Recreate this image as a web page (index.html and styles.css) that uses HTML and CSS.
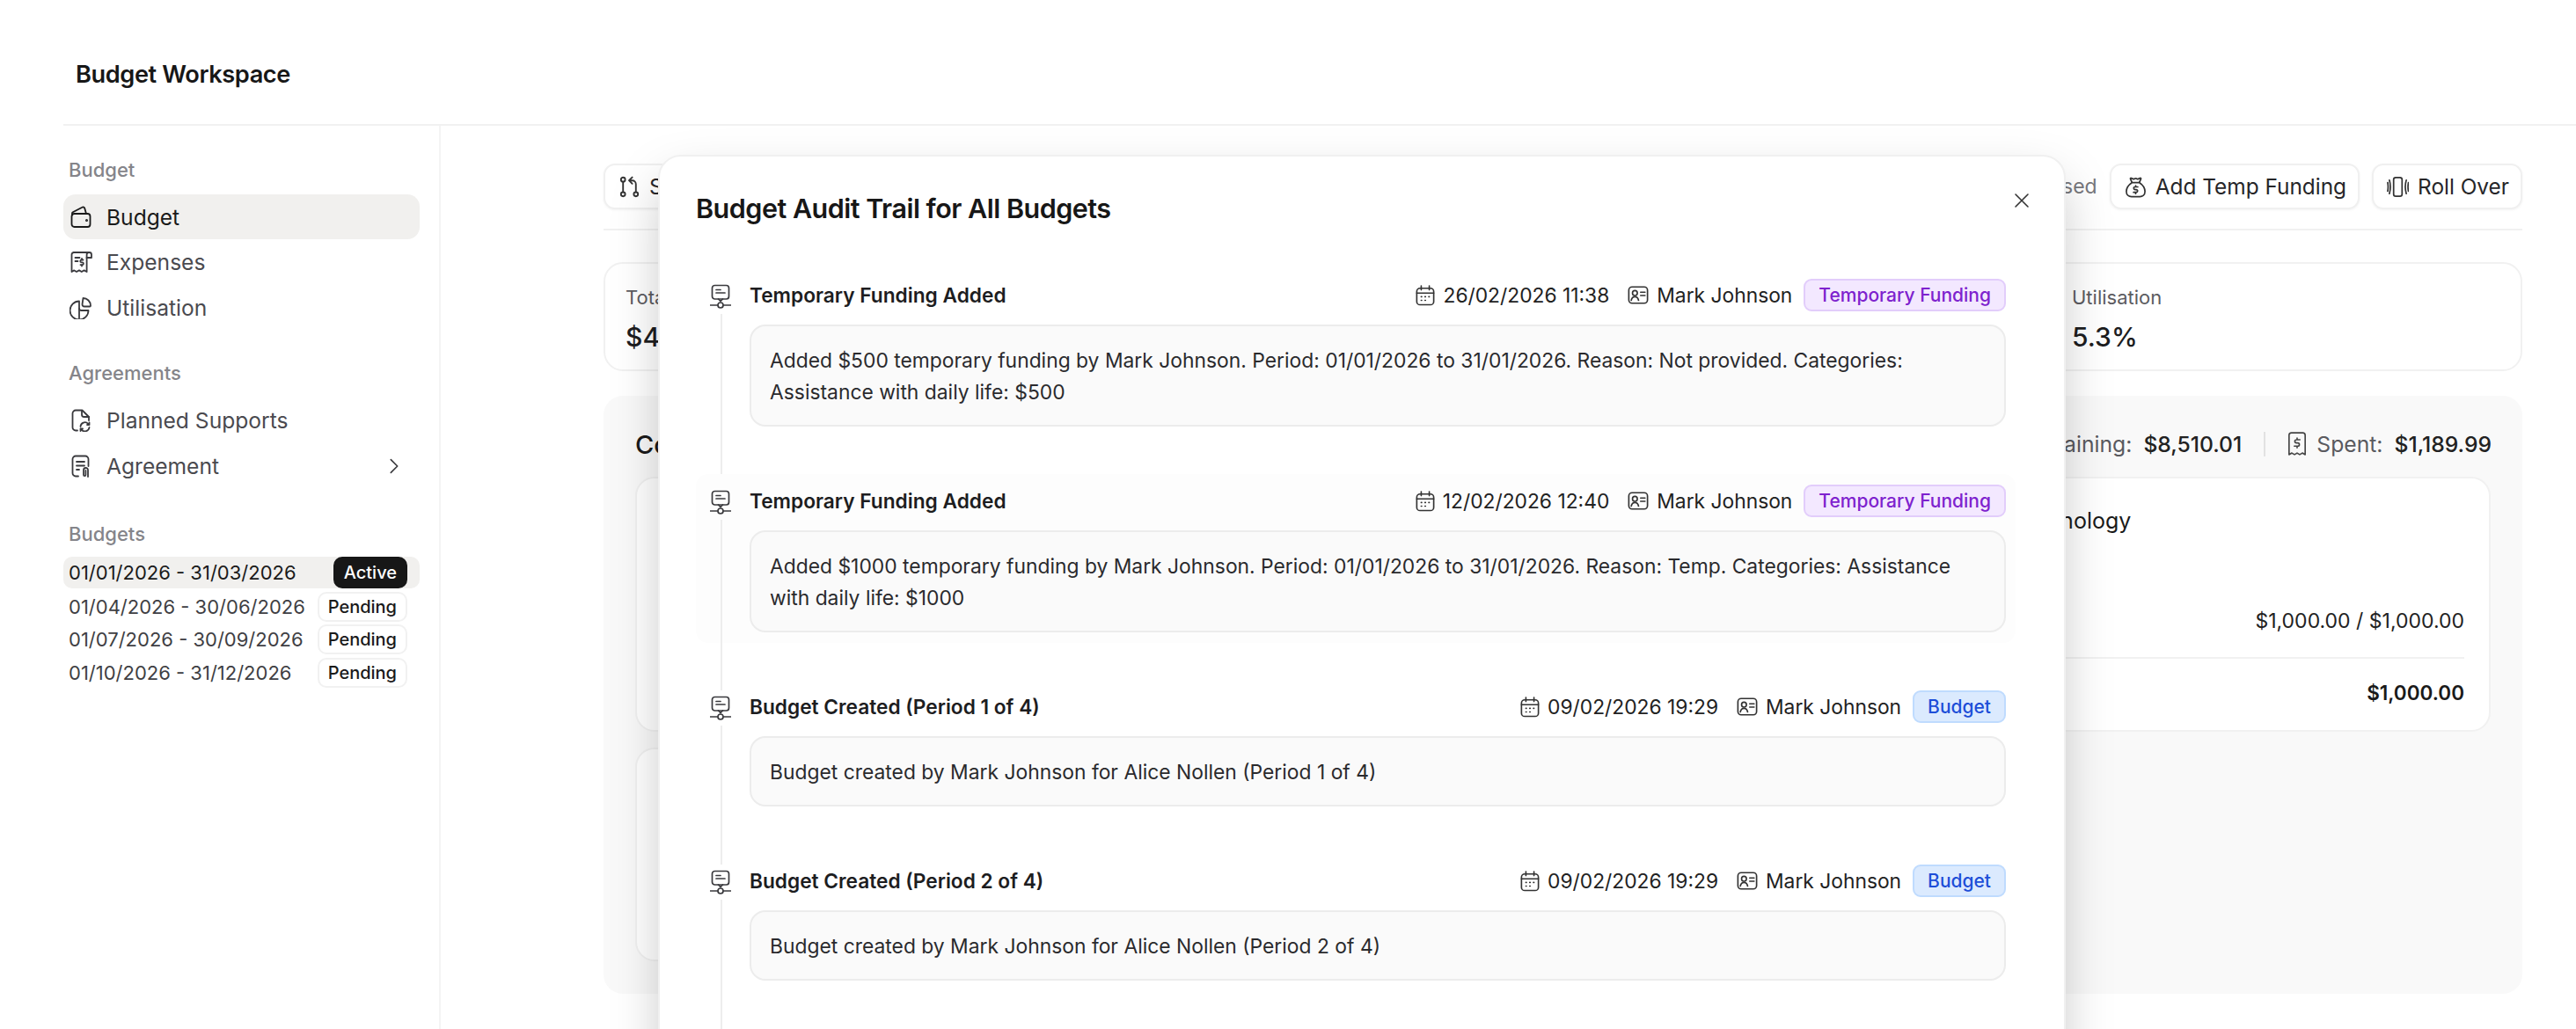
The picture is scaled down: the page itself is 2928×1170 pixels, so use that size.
FILE: index.html
```html
<!DOCTYPE html>
<html lang="en">
<head>
<meta charset="utf-8">
<title>Budget Workspace</title>
<link rel="stylesheet" href="styles.css">
</head>
<body>
<svg class="defs" width="0" height="0" aria-hidden="true">
  <symbol id="i-wallet" viewBox="0 0 26 26"><path d="M2.5 12a3 3 0 0 1 3-3h15a3 3 0 0 1 3 3v9a3 3 0 0 1-3 3h-15a3 3 0 0 1-3-3z"/><path d="M3 10.5V8.6a1.5 1.5 0 0 1 .8-1.3l10.6-5.6a2 2 0 0 1 2.9 1.2L19 9"/><circle cx="19.5" cy="16.5" r=".6"/></symbol>
  <symbol id="i-receipt" viewBox="0 0 26 26"><path d="M5 2h17.5a2.5 2.5 0 0 1 2.5 2.5V8h-5.5"/><path d="M5 2a2.5 2.5 0 0 0-2.5 2.5V24l2.8-1.6 2.7 1.6 3-1.6 2.8 1.6 2.8-1.6 3 1.6V4.500A2.500 2.500 0 0 1 22 2"/><path d="M6.500 8h5M6.500 12h3"/><path d="M15.500 10.500h-1.800a1.400 1.400 0 0 0 0 2.800h.8a1.400 1.400 0 0 1 0 2.800h-2M14 9v1.500M14 16v1.500"/></symbol>
  <symbol id="i-pie" viewBox="0 0 26 26"><path d="M11 5.500a10.500 10.500 0 1 0 10.500 10.500h-8a2.500 2.500 0 0 1-2.500-2.500z"/><path d="M15.500 2a8.500 8.500 0 0 1 8.500 8.500 1 1 0 0 1-1 1h-6a2.500 2.500 0 0 1-2.500-2.500z"/><path d="M11 14v11"/></symbol>
  <symbol id="i-doc-sync" viewBox="0 0 26 26"><path d="M9 24.500H7A3.500 3.500 0 0 1 3.500 21V5A3.500 3.500 0 0 1 7 1.500h7.500L22 9v4"/><path d="M14 2v4.500A2.500 2.500 0 0 0 16.500 9H22"/><path d="M12.500 20a5 5 0 0 1 8.600-3.200l1.400 1.200M22.500 15.500V18H20M22.500 21a5 5 0 0 1-8.600 2.800l-1.400-1.300M12.500 25v-2.500H15"/></symbol>
  <symbol id="i-doc-clip" viewBox="0 0 26 26"><path d="M10 24.500H7A3.500 3.500 0 0 1 3.500 21V5A3.500 3.500 0 0 1 7 1.500h11A3.500 3.500 0 0 1 21.500 5v8"/><path d="M8 8h9M8 12.500h9M8 17h3"/><path d="M21 25v-7.500a2.500 2.500 0 0 0-5 0V23a1.200 1.200 0 0 0 2.400 0v-5"/></symbol>
  <symbol id="i-chev" viewBox="0 0 26 26"><path d="M9 5l8 8-8 8"/></symbol>
  <symbol id="i-pr" viewBox="0 0 24 24"><circle cx="5" cy="4" r="2.300"/><circle cx="5" cy="20" r="2.300"/><circle cx="19" cy="20" r="2.300"/><path d="M5 6.500v11M19 17.500V9a4 4 0 0 0-4-4h-3M15 1.500 11.500 5l3.500 3.500"/></symbol>
  <symbol id="i-bag" viewBox="0 0 26 26"><path d="M8.500 7.500 6.800 3.600c-.3-.7.400-1.300 1-1l2 .9a2 2 0 0 0 1.600 0l.8-.4a2 2 0 0 1 1.600 0l.8.4a2 2 0 0 0 1.600 0l2-.9c.7-.3 1.300.3 1 1l-1.700 3.900"/><path d="M8.500 8h9c3 2 6.500 6 6.500 10.500 0 4-3 6-6 6H8c-3 0-6-2-6-6C2 14 5.500 10 8.500 8z"/><path d="M15.500 13h-3.200a1.600 1.600 0 0 0 0 3.200h1.400a1.600 1.600 0 0 1 0 3.200h-3.200M13 11.500V13M13 19.500V21"/></symbol>
  <symbol id="i-roll" viewBox="0 0 26 26"><rect x="8" y="2" width="10" height="22" rx="2.500"/><path d="M3 5c1.500 5 1.500 11 0 16M1 8c.6 3 .6 7 0 10M23 5c-1.500 5-1.500 11 0 16M25.500 8c-.6 3-.6 7 0 10"/></symbol>
  <symbol id="i-bill" viewBox="0 0 24 30"><path d="M2 4a3 3 0 0 1 3-3h14a3 3 0 0 1 3 3v24l-3.500-2-3.300 2-3.200-2-3.200 2-3.300-2L2 28z"/><path d="M15.500 9.500h-4.300a2 2 0 0 0 0 4h1.600a2 2 0 0 1 0 4H8.500M12 7.500v2M12 17.500v2"/></symbol>
  <symbol id="i-event" viewBox="0 0 24 28"><rect x="2.500" y="1.500" width="19" height="15.500" rx="3"/><path d="M7 6.500h5M7 10h10M9.500 17l2.500 2.500 2.500-2.500M0.500 24h8M15.500 24h8"/><circle cx="12" cy="24" r="3"/></symbol>
  <symbol id="i-cal" viewBox="0 0 24 26"><rect x="1.500" y="4" width="21" height="20.500" rx="4"/><path d="M7 1v5M17 1v5M1.500 10h21"/><path class="dots" d="M7 14.500h.6M11.700 14.500h.6M16.400 14.500h.6M7 19h.6M11.700 19h.6"/></symbol>
  <symbol id="i-id" viewBox="0 0 26 24"><rect x="1.500" y="2" width="23" height="20" rx="4"/><circle cx="9" cy="9.500" r="3"/><path d="M4.500 18.500c.6-3 2.300-4.500 4.500-4.500s3.900 1.500 4.500 4.500M16 8.500h5.500M16 12.500h5.500"/></symbol>
  <symbol id="i-x" viewBox="0 0 18 18"><path d="M2 2l14 14M16 2 2 16"/></symbol>
</svg>

<div class="app">
  <header class="topbar"><h1 class="brand">Budget Workspace</h1></header>
  <div class="shell">
    <aside class="sidebar">
      <section class="nav-group">
        <h2 class="nav-label">Budget</h2>
        <a class="nav-item is-active"><svg class="ico"><use href="#i-wallet"/></svg>Budget</a>
        <a class="nav-item"><svg class="ico"><use href="#i-receipt"/></svg>Expenses</a>
        <a class="nav-item"><svg class="ico"><use href="#i-pie"/></svg>Utilisation</a>
      </section>
      <section class="nav-group">
        <h2 class="nav-label">Agreements</h2>
        <a class="nav-item"><svg class="ico"><use href="#i-doc-sync"/></svg>Planned Supports</a>
        <a class="nav-item"><svg class="ico"><use href="#i-doc-clip"/></svg>Agreement<svg class="ico chev"><use href="#i-chev"/></svg></a>
      </section>
      <section class="nav-group periods">
        <h2 class="nav-label">Budgets</h2>
        <div class="period is-active"><span>01/01/2026 - 31/03/2026</span><span class="pill pill-dark">Active</span></div>
        <div class="period"><span>01/04/2026 - 30/06/2026</span><span class="pill">Pending</span></div>
        <div class="period"><span>01/07/2026 - 30/09/2026</span><span class="pill">Pending</span></div>
        <div class="period"><span>01/10/2026 - 31/12/2026</span><span class="pill">Pending</span></div>
      </section>
    </aside>

    <main class="main">
      <div class="toolbar">
        <button class="btn"><svg class="ico-b"><use href="#i-pr"/></svg>Switch Budget</button>
        <div class="toolbar-right">
          <span class="muted">Closed</span>
          <button class="btn"><svg class="ico-b"><use href="#i-bag"/></svg>Add Temp Funding</button>
          <button class="btn"><svg class="ico-b"><use href="#i-roll"/></svg>Roll Over</button>
        </div>
      </div>

      <div class="stats">
        <div class="stat"><div class="stat-label">Total Budget</div><div class="stat-value">$40,000.00</div></div>
        <div class="stat"><div class="stat-label">Allocated</div><div class="stat-value">$9,700.00</div></div>
        <div class="stat"><div class="stat-label">Spent</div><div class="stat-value">$1,189.99</div></div>
        <div class="stat"><div class="stat-label">Utilisation</div><div class="stat-value">5.3%</div></div>
      </div>

      <div class="panel">
        <div class="panel-head">
          <span class="panel-title">Core Supports</span>
          <div class="summary">
            <span class="sum-item"><span class="sum-key">Remaining:</span><span class="sum-val">$8,510.01</span></span>
            <span class="sum-sep"></span>
            <span class="sum-item"><svg class="ico-bill"><use href="#i-bill"/></svg><span class="sum-key">Spent:</span><span class="sum-val">$1,189.99</span></span>
          </div>
        </div>
        <div class="cards">
          <div class="card"></div>
          <div class="card"></div>
          <div class="card">
            <div class="card-title">Assistive Technology</div>
            <div class="card-row">$1,000.00 / $1,000.00</div>
            <div class="card-total">$1,000.00</div>
          </div>
          <div class="card card-short"></div>
        </div>
      </div>
    </main>
  </div>
</div>

<div class="modal" role="dialog">
  <div class="modal-head">
    <h2 class="modal-title">Budget Audit Trail for All Budgets</h2>
    <svg class="close"><use href="#i-x"/></svg>
  </div>
  <div class="trail">
    <article class="entry">
      <svg class="ico-event"><use href="#i-event"/></svg>
      <div class="entry-head">
        <span class="entry-title">Temporary Funding Added</span>
        <span class="meta"><svg class="ico-cal"><use href="#i-cal"/></svg>26/02/2026 11:38</span>
        <span class="meta"><svg class="ico-id"><use href="#i-id"/></svg>Mark Johnson</span>
        <span class="tag tag-purple">Temporary Funding</span>
      </div>
      <p class="entry-body">Added $500 temporary funding by Mark Johnson. Period: 01/01/2026 to 31/01/2026. Reason: Not provided. Categories: Assistance with daily life: $500</p>
    </article>
    <article class="entry entry-hover">
      <svg class="ico-event"><use href="#i-event"/></svg>
      <div class="entry-head">
        <span class="entry-title">Temporary Funding Added</span>
        <span class="meta"><svg class="ico-cal"><use href="#i-cal"/></svg>12/02/2026 12:40</span>
        <span class="meta"><svg class="ico-id"><use href="#i-id"/></svg>Mark Johnson</span>
        <span class="tag tag-purple">Temporary Funding</span>
      </div>
      <p class="entry-body">Added $1000 temporary funding by Mark Johnson. Period: 01/01/2026 to 31/01/2026. Reason: Temp. Categories: Assistance with daily life: $1000</p>
    </article>
    <article class="entry">
      <svg class="ico-event"><use href="#i-event"/></svg>
      <div class="entry-head">
        <span class="entry-title">Budget Created (Period 1 of 4)</span>
        <span class="meta"><svg class="ico-cal"><use href="#i-cal"/></svg>09/02/2026 19:29</span>
        <span class="meta"><svg class="ico-id"><use href="#i-id"/></svg>Mark Johnson</span>
        <span class="tag tag-blue">Budget</span>
      </div>
      <p class="entry-body">Budget created by Mark Johnson for Alice Nollen (Period 1 of 4)</p>
    </article>
    <article class="entry">
      <svg class="ico-event"><use href="#i-event"/></svg>
      <div class="entry-head">
        <span class="entry-title">Budget Created (Period 2 of 4)</span>
        <span class="meta"><svg class="ico-cal"><use href="#i-cal"/></svg>09/02/2026 19:29</span>
        <span class="meta"><svg class="ico-id"><use href="#i-id"/></svg>Mark Johnson</span>
        <span class="tag tag-blue">Budget</span>
      </div>
      <p class="entry-body">Budget created by Mark Johnson for Alice Nollen (Period 2 of 4)</p>
    </article>
  </div>
</div>
</body>
</html>
```

FILE: styles.css
```css
* { box-sizing: border-box; }
html, body { margin: 0; height: 1170px; overflow: hidden; background: #fff; }
body { font-family: Inter, "Liberation Sans", sans-serif; color: #1a1a1a; position: relative; }
h1, h2, p { margin: 0; font: inherit; }
.defs { position: absolute; }
svg { fill: none; stroke: currentColor; stroke-width: 1.8; stroke-linecap: round; stroke-linejoin: round; flex: none; }

.app { padding-left: 72px; height: 1170px; display: flex; flex-direction: column; }
.topbar { height: 143px; border-bottom: 2px solid #f1f1f1; padding: 68px 0 0 14px; flex: none; }
.brand { font-size: 27.2px; line-height: 34px; font-weight: 600; letter-spacing: -.4px; color: #171717; }
.shell { flex: 1; display: flex; min-height: 0; }

.sidebar { width: 429px; flex: none; border-right: 2px solid #f4f4f4; padding: 36px 22px 0 0; display: flex; flex-direction: column; }
.nav-group { margin-bottom: 34px; }
.nav-label { font-size: 22px; line-height: 28px; font-weight: 500; color: #85858a; padding-left: 6px; margin-bottom: 14px; }
.nav-item { display: flex; align-items: center; gap: 16px; height: 52px; padding-left: 7px; border-radius: 14px; font-size: 24.6px; color: #4a4a4f; }
.nav-item.is-active { background: #f1f0ee; color: #1a1a1a; height: 51px; }
.ico { width: 26px; height: 26px; color: #3a3a3e; }
.is-active .ico { color: #1a1a1a; }
.chev { margin-left: auto; margin-right: 17px; width: 24px; height: 24px; }

.periods { margin: 3px 0 0; }
.periods .nav-label { margin-bottom: 12px; }
.period { display: flex; align-items: center; justify-content: space-between; height: 37.5px; padding: 0 14px 0 6px; font-size: 22px; color: #3f3f44; white-space: nowrap; }
.period.is-active { background: #f1f0ee; color: #1a1a1a; height: 36px; border-radius: 10px; margin-bottom: 2px; }
.pill { height: 34px; display: inline-flex; align-items: center; padding: 0 10px; border: 2px solid #f1f1f1; border-radius: 10px; font-size: 20px; font-weight: 500; color: #1a1a1a; background: #fff; }
.pill-dark { height: 36px; background: #171717; border-color: #171717; color: #fff; }

.main { flex: 1; min-width: 0; padding: 43px 61px 0 185px; display: flex; flex-direction: column; }
.toolbar { display: flex; justify-content: space-between; align-items: center; padding-bottom: 22px; border-bottom: 2px solid #f1f1f1; margin-bottom: 36px; }
.toolbar-right { display: flex; align-items: center; gap: 14px; }
.muted { font-size: 23px; color: #77777c; }
.btn { height: 52px; display: inline-flex; align-items: center; gap: 10px; padding: 0 13px 0 15px; background: #fff; border: 2px solid #f0f0f0; border-radius: 13px; box-shadow: 0 1px 3px rgba(0,0,0,.05); font: 400 24.4px Inter, sans-serif; color: #262629; }
.ico-b { width: 25px; height: 25px; color: #333; }

.stats { display: grid; grid-template-columns: repeat(4, 1fr); column-gap: 61px; height: 124px; padding: 23px 23px 0; border: 2px solid #f1f1f1; border-radius: 22px; margin-bottom: 28px; }
.stat-label { font-size: 22px; line-height: 30px; color: #5c5c61; }
.stat-value { font-size: 30px; line-height: 44px; margin-top: 8px; font-weight: 500; color: #1d1d1f; }

.panel { height: 680px; background: #f9f9f9; border-radius: 22px; padding: 36px 36px 0; }
.panel-head { display: flex; justify-content: space-between; align-items: center; height: 38px; margin-bottom: 18px; }
.panel-title { font-size: 29px; font-weight: 500; }
.summary { display: flex; align-items: center; gap: 25px; font-size: 24.7px; margin-right: -1px; }
.sum-item { display: flex; align-items: center; gap: 13px; }
.sum-key { color: #5a5a5f; }
.sum-val { font-weight: 500; color: #222; }
.sum-sep { width: 2px; height: 28px; background: #e2e2e2; }
.ico-bill { width: 22px; height: 28px; color: #444; margin-right: -2px; }

.cards { display: grid; grid-template-columns: repeat(3, 1fr); gap: 18px; grid-auto-rows: min-content; }
.card { height: 290px; background: #fff; border: 2px solid #f1f1f1; border-radius: 22px; padding: 30px 28px 0 30px; }
.card-short { height: 243px; }
.card-title { font-size: 25px; line-height: 36px; }
.card-row { margin-top: 80px; padding-bottom: 25px; text-align: right; font-size: 23px; line-height: 32px; border-bottom: 2px solid #f1f1f1; color: #222; }
.card-total { margin-top: 23px; text-align: right; font-size: 22.5px; line-height: 32px; font-weight: 600; }

.modal { position: absolute; left: 748px; top: 176px; width: 1600px; height: 1100px; background: #fff; border: 2px solid #f0f0f0; border-radius: 26px; box-shadow: 0 25px 60px -8px rgba(0,0,0,.26); padding: 0 41px; }
.modal-head { display: flex; justify-content: space-between; height: 127px; padding-top: 38px; }
.modal-title { font-size: 30.5px; line-height: 42px; font-weight: 600; letter-spacing: -.5px; color: #171717; }
.close { width: 18px; height: 18px; margin: 3px -2px 0 0; color: #333; stroke-width: 1.6; }

.trail { padding-right: 14px; display: flex; flex-direction: column; gap: 42px; }
.entry { position: relative; display: grid; grid-template-columns: 34px 1fr; column-gap: 16px; row-gap: 15px; padding: 12px 11px; border-radius: 14px; }
.entry-hover { background: #fdfdfd; }
.entry::before { content: ""; position: absolute; left: 28px; top: 52px; bottom: -54px; width: 2px; background: #ededed; }
.ico-event { width: 24px; height: 28px; margin: 6px 0 0 5px; color: #3a3a3e; stroke-width: 1.7; }
.entry-head { display: flex; align-items: center; height: 37px; font-size: 22.8px; color: #222; }
.entry-title { font-weight: 600; margin-right: auto; color: #1d1d1f; font-size: 22.7px; }
.meta { display: inline-flex; align-items: center; gap: 9px; margin-right: 21px; }
.meta + .meta { margin-right: 13px; }
.ico-cal { width: 22px; height: 26px; color: #333; }
.ico-id { width: 24px; height: 23px; color: #333; }
.tag { height: 37px; display: inline-flex; align-items: center; padding: 0 15px; border-radius: 9px; border: 2px solid; font-size: 21px; font-weight: 500; }
.tag-purple { background: #f3e8ff; border-color: #e2cdfb; color: #7e22ce; }
.tag-blue { background: #dbeafe; border-color: #bfdbfe; color: #1d4ed8; }
.entry-body { grid-column: 2; background: #fafafa; border: 2px solid #ececec; border-radius: 18px; padding: 21px 21px 19px; font-size: 22.85px; line-height: 36px; color: #2a2a2d; }
```
